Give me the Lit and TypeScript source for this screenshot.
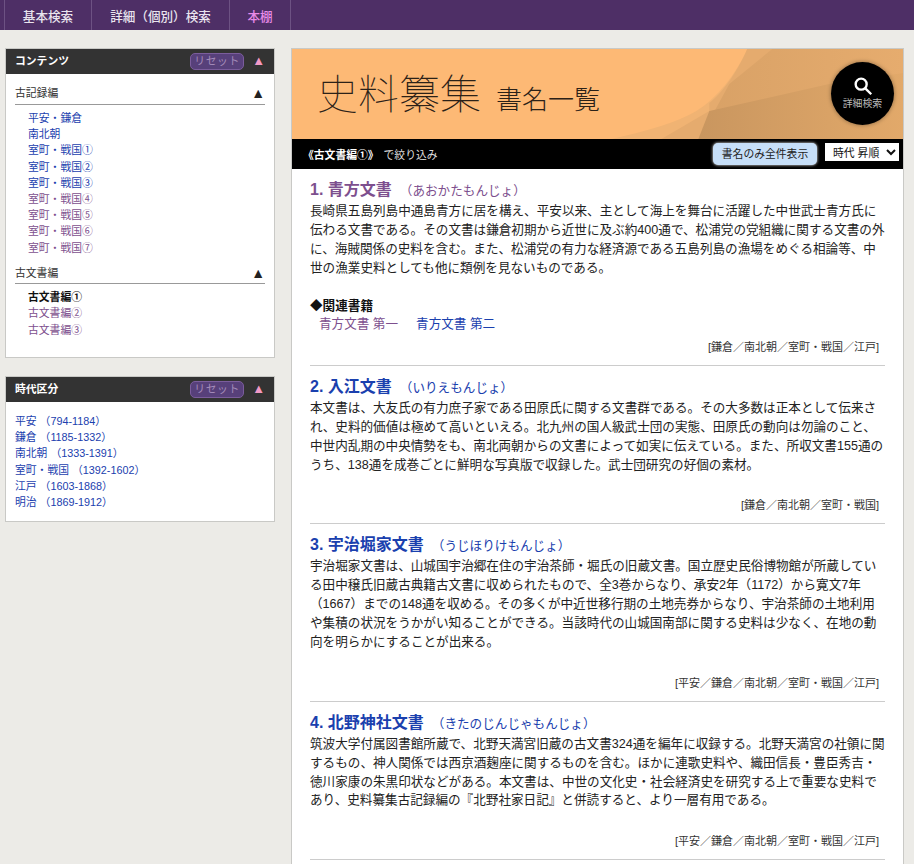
import { LitElement, css, html, svg } from 'lit';
import { customElement } from 'lit/decorators.js';

const NAV = [
  { label: '基本検索', width: 87 },
  { label: '詳細（個別）検索', width: 138 },
  { label: '本棚', width: 62, active: true },
];

const RECORDS = [
  { label: '平安・鎌倉' },
  { label: '南北朝' },
  { label: '室町・戦国①' },
  { label: '室町・戦国②' },
  { label: '室町・戦国③' },
  { label: '室町・戦国④', visited: true },
  { label: '室町・戦国⑤', visited: true },
  { label: '室町・戦国⑥', visited: true },
  { label: '室町・戦国⑦', visited: true },
];

const ERAS = ['平安 （794-1184）', '鎌倉 （1185-1332）', '南北朝 （1333-1391）', '室町・戦国 （1392-1602）', '江戸 （1603-1868）', '明治 （1869-1912）'];

const BOOKS = [
  {
    no: 1,
    name: '青方文書',
    kana: '（あおかたもんじょ）',
    visited: true,
    text: `長崎県五島列島中通島青方に居を構え、平安以来、主として海上を舞台に活躍した中世武士青方氏に
伝わる文書である。その文書は鎌倉初期から近世に及ぶ約400通で、松浦党の党組織に関する文書の外
に、海賊関係の史料を含む。また、松浦党の有力な経済源である五島列島の漁場をめぐる相論等、中
世の漁業史料としても他に類例を見ないものである。`,
    related: true,
    tags: '[鎌倉／南北朝／室町・戦国／江戸]',
  },
  {
    no: 2,
    name: '入江文書',
    kana: '（いりえもんじょ）',
    text: `本文書は、大友氏の有力庶子家である田原氏に関する文書群である。その大多数は正本として伝来さ
れ、史料的価値は極めて高いといえる。北九州の国人級武士団の実態、田原氏の動向は勿論のこと、
中世内乱期の中央情勢をも、南北両朝からの文書によって如実に伝えている。また、所収文書155通の
うち、138通を成巻ごとに鮮明な写真版で収録した。武士団研究の好個の素材。`,
    tags: '[鎌倉／南北朝／室町・戦国]',
  },
  {
    no: 3,
    name: '宇治堀家文書',
    kana: '（うじほりけもんじょ）',
    text: `宇治堀家文書は、山城国宇治郷在住の宇治茶師・堀氏の旧蔵文書。国立歴史民俗博物館が所蔵してい
る田中穣氏旧蔵古典籍古文書に収められたもので、全3巻からなり、承安2年（1172）から寛文7年
（1667）までの148通を収める。その多くが中近世移行期の土地売券からなり、宇治茶師の土地利用
や集積の状況をうかがい知ることができる。当該時代の山城国南部に関する史料は少なく、在地の動
向を明らかにすることが出来る。`,
    tags: '[平安／鎌倉／南北朝／室町・戦国／江戸]',
  },
  {
    no: 4,
    name: '北野神社文書',
    kana: '（きたのじんじゃもんじょ）',
    text: `筑波大学付属図書館所蔵で、北野天満宮旧蔵の古文書324通を編年に収録する。北野天満宮の社領に関
するもの、神人関係では西京酒麹座に関するものを含む。ほかに連歌史料や、織田信長・豊臣秀吉・
徳川家康の朱黒印状などがある。本文書は、中世の文化史・社会経済史を研究する上で重要な史料で
あり、史料纂集古記録編の『北野社家日記』と併読すると、より一層有用である。`,
    tags: '[平安／鎌倉／南北朝／室町・戦国／江戸]',
  },
];

const headerArt = svg`
  <svg class="art" viewBox="0 0 612 90" preserveAspectRatio="none" aria-hidden="true">
    <defs>
      <linearGradient id="upper" x1="0" x2="1" y1="0" y2="0">
        <stop offset="0" stop-color="#d8a166" />
        <stop offset="1" stop-color="#e6ac6e" />
      </linearGradient>
      <linearGradient id="lower" x1="0" x2="1" y1="0" y2="0">
        <stop offset="0" stop-color="#c9965f" />
        <stop offset="1" stop-color="#e2a96a" />
      </linearGradient>
    </defs>
    <rect width="612" height="90" fill="#fdb975" />
    <path d="M456 0C445 25 425 50 405 62C385 74 355 82 320 90H612V0Z" fill="#f0b373" />
    <path d="M456 0C445 25 430 45 418 54V62L370 90H612V0Z" fill="#e5ab6e" />
    <path d="M481 0L438 35L408 90H612V0Z" fill="url(#upper)" />
    <path d="M418 62L538 35L612 24V90H407Z" fill="url(#lower)" />
  </svg>
`;

@customElement('app-root')
export class AppRoot extends LitElement {
  static styles = css`
    :host {
      display: block;
      height: 864px;
      overflow: hidden;
      background: #ecebe7;
      color: #222;
      font-family: 'Liberation Sans', 'Noto Sans CJK JP', sans-serif;
    }

    a {
      color: #1a40ae;
      text-decoration: none;
    }

    a.visited {
      color: #7d4f8e;
    }

    .nav {
      display: flex;
      height: 30px;
      padding-left: 4px;
      background: #4e2f66;
    }

    .nav a {
      display: flex;
      align-items: center;
      justify-content: center;
      box-sizing: border-box;
      border-left: 1px solid #6d5283;
      color: #e9e4ee;
      font-size: 12.6px;
      font-weight: 500;
    }

    .nav a:last-child {
      border-right: 1px solid #6d5283;
    }

    .nav a.active {
      color: #e88ae8;
    }

    .layout {
      display: flex;
      align-items: flex-start;
      gap: 16px;
      padding: 18px 10px 0 5px;
    }

    .side {
      display: flex;
      flex: none;
      flex-direction: column;
      gap: 18px;
      width: 270px;
    }

    .panel {
      box-sizing: border-box;
      border: 1px solid #c9c9c6;
      background: #fff;
      font-size: 10.8px;
      line-height: 16.2px;
    }

    .panel-head {
      display: flex;
      align-items: center;
      height: 25px;
      padding: 0 9px;
      background: #333;
      color: #fff;
      font-size: 10.8px;
      font-weight: 700;
    }

    .reset {
      margin-left: auto;
      box-sizing: border-box;
      width: 54px;
      height: 17px;
      border: 1px solid #7b5d9c;
      border-radius: 5px;
      background: #57407a;
      color: #a48bb9;
      font-size: 10.8px;
      font-weight: 400;
      line-height: 15px;
      letter-spacing: 0.6px;
      text-align: center;
    }

    .arrow {
      margin-left: 8px;
      color: #f29ac6;
      font-size: 13px;
    }

    .contents {
      height: 283px;
      box-sizing: border-box;
      padding: 9px 9px 0;
    }

    .group-title {
      display: flex;
      align-items: center;
      justify-content: space-between;
      height: 21px;
      border-bottom: 1px solid #999;
      color: #333;
    }

    .group-title span:last-child {
      font-size: 14px;
      color: #222;
    }

    .group-list {
      margin: 5px 0 6.4px;
      padding: 0 0 0 13px;
      list-style: none;
    }

    .group-list .current {
      color: #111;
      font-weight: 700;
    }

    .eras {
      margin: 0;
      padding: 11px 9px 11px;
      list-style: none;
    }

    .main {
      box-sizing: border-box;
      flex: 1;
      min-width: 0;
      height: 900px;
      border: 1px solid #c9c9c6;
      border-bottom: 0;
      background: #fff;
    }

    .hero {
      position: relative;
      height: 90px;
      overflow: hidden;
      display: flex;
      align-items: center;
      padding: 3px 0 0 25px;
      box-sizing: border-box;
      color: #2b2118;
    }

    .art {
      position: absolute;
      inset: 0;
      width: 100%;
      height: 100%;
    }

    .hero h1 {
      position: relative;
      margin: 0;
      font-size: 41px;
      font-weight: 100;
      line-height: 1;
    }

    .hero h1 small {
      margin-left: 15px;
      font-size: 26px;
      font-weight: 300;
    }

    .search {
      position: absolute;
      top: 13px;
      right: 9px;
      display: flex;
      flex-direction: column;
      align-items: center;
      justify-content: center;
      width: 63px;
      height: 63px;
      border-radius: 50%;
      background: #000;
      box-shadow: 0 0 4px rgba(0, 0, 0, 0.4);
      color: #bbb;
      font-size: 9.9px;
      line-height: 14px;
    }

    .search svg {
      width: 22px;
      height: 22px;
      margin-top: -2px;
    }

    .filter {
      display: flex;
      align-items: center;
      height: 30px;
      padding: 0 4px 0 11px;
      background: #000;
      color: #ddd;
      font-size: 10.8px;
    }

    .filter b {
      margin-right: 5px;
      color: #fff;
    }

    .all {
      margin-left: auto;
      box-sizing: border-box;
      width: 104px;
      height: 22px;
      border-radius: 5px;
      background: #c7dff8;
      box-shadow: 0 0 3px #fff;
      color: #222;
      font-size: 10.8px;
      line-height: 22px;
      text-align: center;
    }

    .sort {
      display: flex;
      align-items: center;
      justify-content: space-between;
      box-sizing: border-box;
      width: 74px;
      height: 18px;
      margin: -4px 0 0 8px;
      padding: 0 3px 0 8px;
      background: #fff;
      color: #111;
      font-size: 10.8px;
    }

    .sort svg {
      width: 10px;
      height: 7px;
    }

    .books {
      padding: 10px 18px 0;
    }

    .book {
      border-bottom: 1px solid #ccc;
      padding-bottom: 10px;
      margin-bottom: 10px;
      font-size: 12.6px;
      line-height: 18.9px;
    }

    .book h2 {
      height: 22.9px;
      margin: 0;
      font-size: 16px;
      font-weight: 700;
      line-height: 22px;
    }

    .book h2 small {
      margin-left: 8px;
      font-size: 12.6px;
      font-weight: 400;
    }

    .book p {
      margin: 0;
      white-space: pre-line;
    }

    .related {
      margin-top: 19px;
      color: #111;
      font-weight: 700;
    }

    .related-links {
      display: flex;
      gap: 18px;
      padding-left: 9px;
    }

    .tags {
      margin-top: 23px;
      padding-right: 6px;
      color: #333;
      font-size: 11px;
      line-height: 16px;
      text-align: right;
    }

    .related-links + .tags {
      margin-top: 4.6px;
    }
  `;

  render() {
    return html`
      <nav class="nav">
        ${NAV.map(
          (n) => html`<a class=${n.active ? 'active' : ''} style="width:${n.width}px">${n.label}</a>`,
        )}
      </nav>
      <div class="layout">
        <aside class="side">
          <section class="panel">
            ${this.panelHead('コンテンツ')}
            <div class="contents">
              <div class="group-title"><span>古記録編</span><span>▲</span></div>
              <ul class="group-list">
                ${RECORDS.map(
                  (r) => html`<li><a class=${r.visited ? 'visited' : ''}>${r.label}</a></li>`,
                )}
              </ul>
              <div class="group-title"><span>古文書編</span><span>▲</span></div>
              <ul class="group-list">
                <li class="current">古文書編①</li>
                <li><a class="visited">古文書編②</a></li>
                <li><a class="visited">古文書編③</a></li>
              </ul>
            </div>
          </section>
          <section class="panel">
            ${this.panelHead('時代区分')}
            <ul class="eras">
              ${ERAS.map((e) => html`<li><a>${e}</a></li>`)}
            </ul>
          </section>
        </aside>
        <main class="main">
          <header class="hero">
            ${headerArt}
            <h1>史料纂集<small>書名一覧</small></h1>
            <div class="search">
              <svg viewBox="0 0 24 24" fill="none" stroke="#fff" stroke-width="2.6">
                <circle cx="10" cy="10" r="6" />
                <path d="M14.5 14.5L21 21" />
              </svg>
              詳細検索
            </div>
          </header>
          <div class="filter">
            <b>《古文書編①》</b>で絞り込み
            <span class="all">書名のみ全件表示</span>
            <span class="sort">
              時代 昇順
              <svg viewBox="0 0 10 7" fill="none" stroke="#111" stroke-width="2"><path d="M1 1l4 4 4-4" /></svg>
            </span>
          </div>
          <div class="books">
            ${BOOKS.map(
              (b) => html`
                <article class="book">
                  <h2>
                    <a class=${b.visited ? 'visited' : ''}>${b.no}. ${b.name}<small>${b.kana}</small></a>
                  </h2>
                  <p>${b.text}</p>
                  ${b.related
                    ? html`
                        <div class="related">◆関連書籍</div>
                        <div class="related-links">
                          <a class="visited">青方文書 第一</a>
                          <a>青方文書 第二</a>
                        </div>
                      `
                    : ''}
                  <div class="tags">${b.tags}</div>
                </article>
              `,
            )}
          </div>
        </main>
      </div>
    `;
  }

  private panelHead(title: string) {
    return html`
      <div class="panel-head">
        <span>${title}</span>
        <span class="reset">リセット</span>
        <span class="arrow">▲</span>
      </div>
    `;
  }
}
